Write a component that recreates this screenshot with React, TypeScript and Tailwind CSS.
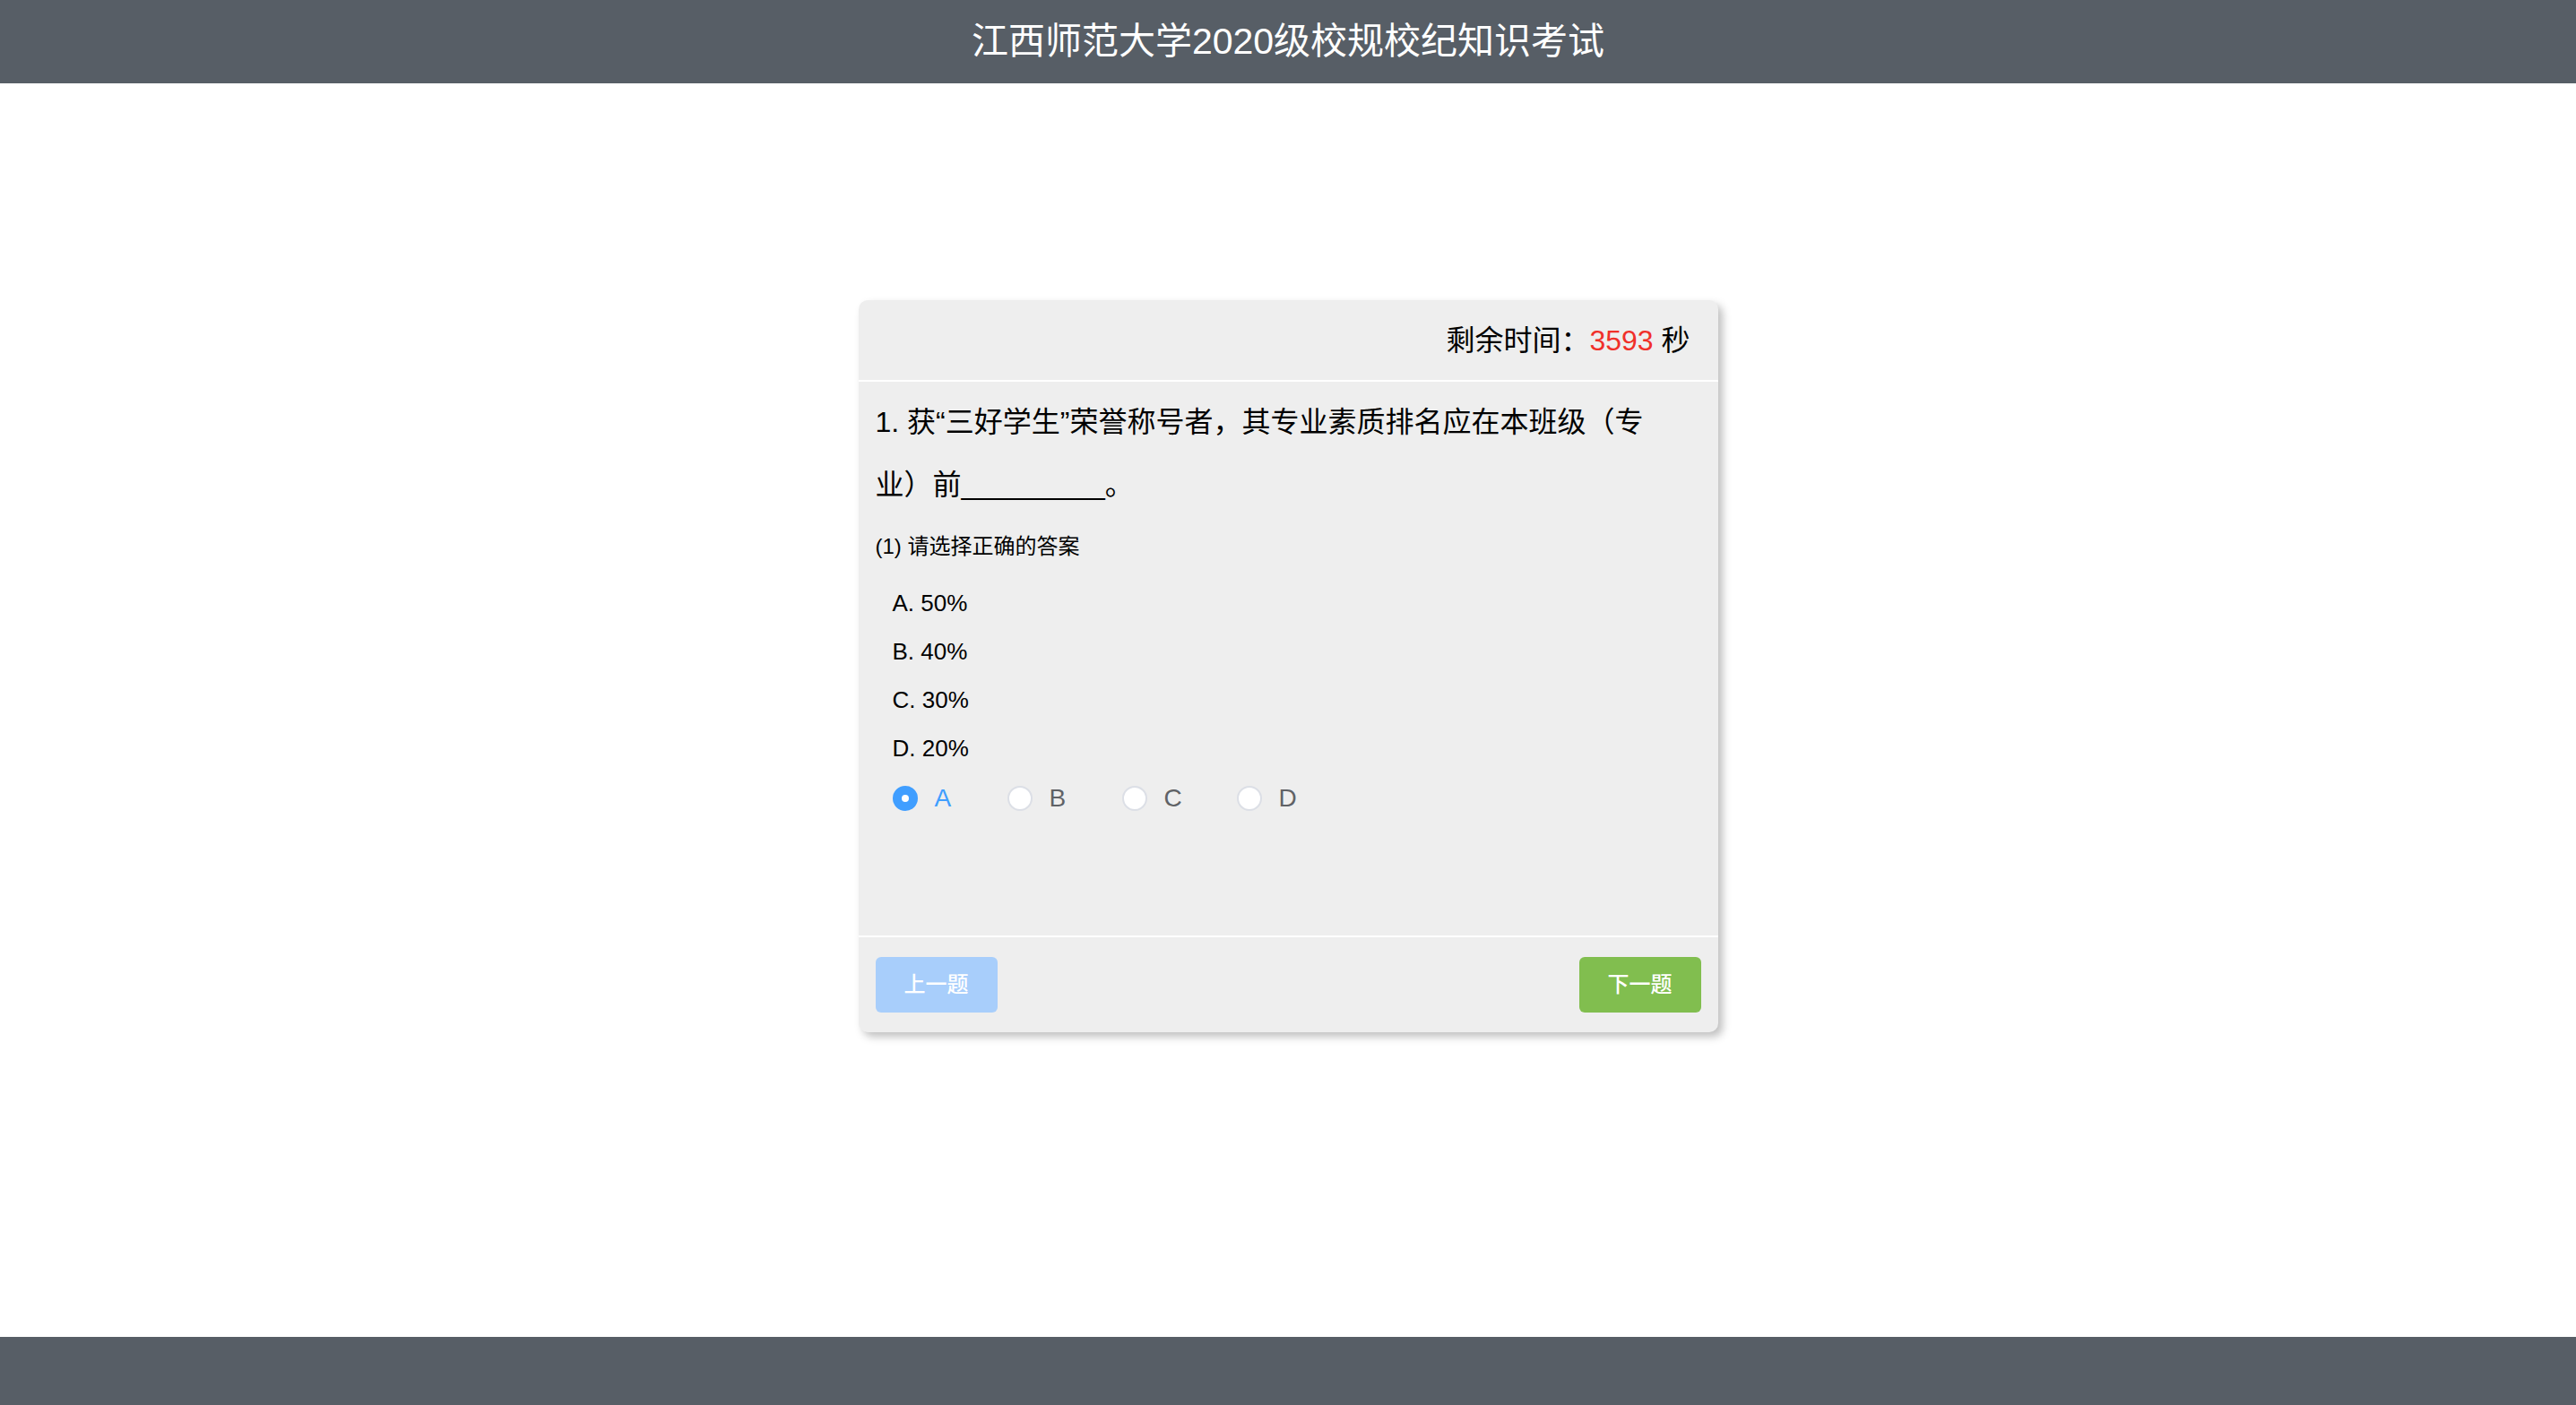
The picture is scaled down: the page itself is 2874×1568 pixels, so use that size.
import React from "react";

const FONT = { fontFamily: '"Liberation Sans", "Noto Sans CJK SC", sans-serif' };

export default function App() {
  const options = ["A. 50%", "B. 40%", "C. 30%", "D. 20%"];
  const radios = ["A", "B", "C", "D"];
  const selected = "A";
  return (
    <div className="h-screen flex flex-col bg-white" style={FONT}>
      <header className="h-[93px] shrink-0 bg-[#575e66] flex items-center justify-center text-white text-[41px]">
        江西师范大学2020级校规校纪知识考试
      </header>
      <main className="flex-1 flex justify-center items-start pt-[242px]">
        <div className="w-[959px] rounded-[10px] bg-[#eeeeee] shadow-[5px_5px_10px_rgba(0,0,0,0.25)]">
          <div className="h-[89px] flex items-center justify-end pr-[31px] text-[32px] text-black">
            <span>剩余时间：</span>
            <span className="text-[#f0302a]">3593</span>
            <span>&nbsp;秒</span>
          </div>
          <div className="h-[2px] bg-white" />
          <div className="h-[618px] px-[19px] pt-[10px]">
            <p className="text-[32px] leading-[70px] text-black">
              1. 获“三好学生”荣誉称号者，其专业素质排名应在本班级（专
              <br />
              业）前_________。
            </p>
            <p className="mt-[17px] text-[24px] leading-[34px] text-black">(1) 请选择正确的答案</p>
            <div className="mt-[19px] pl-[19px]">
              {options.map((o) => (
                <div key={o} className="text-[26px] leading-[54px] text-black">
                  {o}
                </div>
              ))}
            </div>
            <div className="mt-[9px] pl-[19px] h-[40px] flex items-center">
              {radios.map((r) => {
                const on = r === selected;
                return (
                  <div key={r} className="w-[128px] flex items-center">
                    {on ? (
                      <span className="w-[28px] h-[28px] rounded-full bg-[#409eff] flex items-center justify-center">
                        <span className="w-[8px] h-[8px] rounded-full bg-white" />
                      </span>
                    ) : (
                      <span className="w-[28px] h-[28px] rounded-full bg-white border-2 border-[#dcdfe6]" />
                    )}
                    <span className={"ml-[19px] text-[28px] " + (on ? "text-[#409eff]" : "text-[#606266]")}>{r}</span>
                  </div>
                );
              })}
            </div>
          </div>
          <div className="h-[2px] bg-white" />
          <div className="h-[106px] px-[19px] flex items-center justify-between">
            <button className="w-[136px] h-[62px] rounded-[6px] bg-[#a8cefb] text-white text-[24px] font-medium">
              上一题
            </button>
            <button className="w-[136px] h-[62px] rounded-[6px] bg-[#81be4f] text-white text-[24px] font-medium">
              下一题
            </button>
          </div>
        </div>
      </main>
      <footer className="h-[76px] shrink-0 bg-[#575e66]" />
    </div>
  );
}
